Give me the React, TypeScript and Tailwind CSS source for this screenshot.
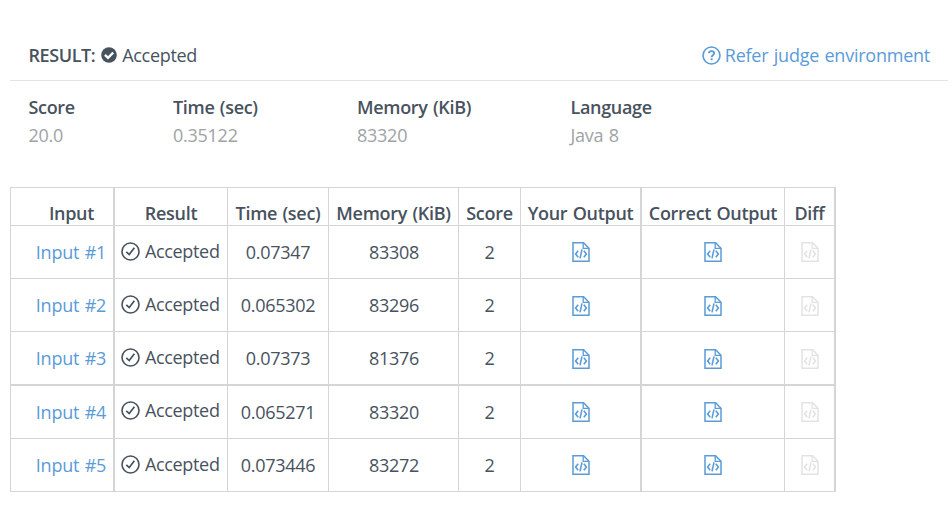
import { ReactNode } from "react";

type Row = { name: string; time: string; memory: string };

const rows: Row[] = [
  { name: "Input #1", time: "0.07347", memory: "83308" },
  { name: "Input #2", time: "0.065302", memory: "83296" },
  { name: "Input #3", time: "0.07373", memory: "81376" },
  { name: "Input #4", time: "0.065271", memory: "83320" },
  { name: "Input #5", time: "0.073446", memory: "83272" },
];

const stats = [
  { label: "Score", value: "20.0", width: "w-[144.5px]" },
  { label: "Time (sec)", value: "0.35122", width: "w-[184px]" },
  { label: "Memory (KiB)", value: "83320", width: "w-[213.5px]" },
  { label: "Language", value: "Java 8", width: "w-[120px]" },
];

const columns = "grid grid-cols-[104px_113px_101px_130px_62px_121px_143px_51px]";

function CheckOutline() {
  return (
    <svg className="size-[19px] shrink-0" viewBox="0 0 19 19" fill="none" stroke="currentColor">
      <circle cx="9.5" cy="9.5" r="8.5" strokeWidth="1.6" />
      <path d="M5.3 9.8 8.2 12.6 13.4 5.8" strokeWidth="1.7" />
    </svg>
  );
}

function CheckSolid() {
  return (
    <svg className="size-4 shrink-0" viewBox="0 0 16 16" fill="none">
      <circle cx="8" cy="8" r="7.8" fill="currentColor" />
      <path d="M3.9 7.8 7 10.8 12.2 5.6" stroke="#fff" strokeWidth="2.3" />
    </svg>
  );
}

function HelpIcon() {
  return (
    <svg className="size-[19px] shrink-0" viewBox="0 0 19 19" fill="none" stroke="currentColor">
      <circle cx="9.5" cy="9.5" r="8.5" strokeWidth="1.6" />
      <path d="M6.8 7.2C7 5.8 8 5.1 9.4 5.1c1.6 0 2.7.9 2.7 2.2 0 1.8-2.5 1.9-2.5 3.9" strokeWidth="1.9" />
      <path d="M8.6 13.3h2" strokeWidth="1.9" />
    </svg>
  );
}

function CodeFile() {
  return (
    <svg className="h-5 w-[18px]" viewBox="0 0 18 20" fill="none" stroke="currentColor">
      <path d="M1 .8h10.6L17 6.2v13H1z" strokeWidth="1.5" />
      <path d="M11.2.8v5.6H17" strokeWidth="1.3" />
      <path d="M6.2 8.8 3.6 12l2.6 3.2M11.8 8.8l2.6 3.2-2.6 3.2M10 7.4 8 16.4" strokeWidth="1.6" />
    </svg>
  );
}

function Cell({ className = "", children }: { className?: string; children: ReactNode }) {
  return (
    <div className={`flex items-center justify-center whitespace-nowrap border-r border-[#d5d5d5] ${className}`}>
      {children}
    </div>
  );
}

export default function App() {
  return (
    <main className="h-[527px] w-[952px] overflow-hidden bg-white pl-[10px] font-['Open_Sans','Noto_Sans',sans-serif] text-[18px] leading-7 font-normal tracking-[-0.26px] text-[#48525e] [word-spacing:1px]">
      <header className="flex h-[81px] w-[938px] items-end justify-between border-b border-[#e3e4e6] pr-[18px] pb-[11px] pl-[18.5px]">
        <div className="flex items-center">
          <span className="font-semibold tracking-[-0.42px]">RESULT:</span>
          <span className="ml-[6px] flex items-center gap-[5px] tracking-[-0.32px]">
            <CheckSolid />
            Accepted
          </span>
        </div>
        <a className="flex items-center gap-[4px] tracking-[-0.24px] text-[#5a9bd8]">
          <HelpIcon />
          <span className="whitespace-nowrap">Refer judge environment</span>
        </a>
      </header>

      <dl className="flex h-[106px] pt-[12px] pl-[18.5px]">
        {stats.map((s) => (
          <div key={s.label} className={s.width}>
            <dt className="font-semibold tracking-[-0.32px] whitespace-nowrap">{s.label}</dt>
            <dd className="text-[#a0a2a6]">{s.value}</dd>
          </div>
        ))}
      </dl>

      <section className="w-[826px] border-t border-l border-[#d5d5d5]">
        <div className={`${columns} h-[38px] border-b border-[#d5d5d5] font-semibold tracking-[-0.3px] [&>div]:pt-[11px] [&>div]:pb-[3px]`}>
          <Cell className="border-r-2 pl-[19px]">Input</Cell>
          <Cell>Result</Cell>
          <Cell>Time (sec)</Cell>
          <Cell>Memory (KiB)</Cell>
          <Cell>Score</Cell>
          <Cell className="border-r-2">Your Output</Cell>
          <Cell>Correct Output</Cell>
          <Cell className="border-r-2">Diff</Cell>
        </div>
        {rows.map((r, i) => {
          const shift = i === 1 || i === 2 ? "pt-[2px]" : "";
          return (
            <div
              key={r.name}
              className={`${columns} border-[#d5d5d5] ${i === 2 ? "h-[54px] border-b-2" : "h-[53px] border-b"}`}
            >
              <Cell className="border-r-2 pl-[18px] tracking-[-0.22px] text-[#5a9bd8]">{r.name}</Cell>
              <Cell className={`gap-[4.5px] pr-px tracking-[-0.32px] ${i === 3 ? "pb-[4px]" : "pb-[2px]"}`}>
                <CheckOutline />
                Accepted
              </Cell>
              <Cell>{r.time}</Cell>
              <Cell className="pl-px">{r.memory}</Cell>
              <Cell>2</Cell>
              <Cell className={`border-r-2 text-[#5a9bd8] ${shift}`}><CodeFile /></Cell>
              <Cell className={`text-[#5a9bd8] ${shift}`}><CodeFile /></Cell>
              <Cell className={`border-r-2 text-[#e3e3e3] ${shift}`}><CodeFile /></Cell>
            </div>
          );
        })}
      </section>
    </main>
  );
}
